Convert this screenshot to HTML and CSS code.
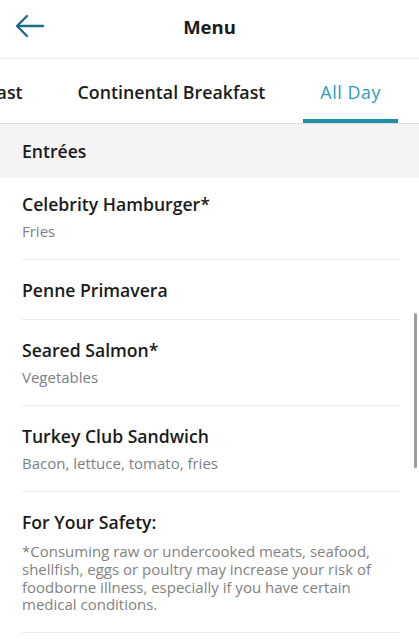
FILE: index.html
```html
<!DOCTYPE html>
<html lang="en">
<head>
    <meta charset="UTF-8">
    <meta name="viewport" content="width=device-width, initial-scale=1.0">
    <title>Menu</title>
    <link rel="stylesheet" href="styles.css">
</head>
<body>
    <header class="top-bar">
        <button class="back-btn" aria-label="Back">
            <svg width="30" height="24" viewBox="0 0 30 24" fill="none" stroke="currentColor" stroke-width="2.4" stroke-linecap="round" stroke-linejoin="round">
                <path d="M28 12H3"/>
                <path d="M12 2L2 12l10 10"/>
            </svg>
        </button>
        <h1>Menu</h1>
    </header>

    <nav class="tabs">
        <div class="tab-track">
            <div class="tab">Breakfast</div>
            <div class="tab">Continental Breakfast</div>
            <div class="tab active">All Day</div>
        </div>
    </nav>

    <main class="content">
        <div class="section-head">Entrées</div>

        <ul class="items">
            <li class="item">
                <div class="item-name">Celebrity Hamburger*</div>
                <div class="item-desc">Fries</div>
            </li>
            <li class="item">
                <div class="item-name">Penne Primavera</div>
            </li>
            <li class="item">
                <div class="item-name">Seared Salmon*</div>
                <div class="item-desc">Vegetables</div>
            </li>
            <li class="item">
                <div class="item-name">Turkey Club Sandwich</div>
                <div class="item-desc">Bacon, lettuce, tomato, fries</div>
            </li>
            <li class="item">
                <div class="item-name">For Your Safety:</div>
                <p class="note">*Consuming raw or undercooked meats, seafood, shellfish, eggs or poultry may increase your risk of foodborne illness, especially if you have certain medical conditions.</p>
            </li>
        </ul>

        <div class="scrollbar"></div>
    </main>
</body>
</html>
```

FILE: styles.css
```css
:root {
    --teal: #1f8fa6;
    --teal-dark: #1e6b8a;
    --text: #1b1b1b;
    --muted: #7b8088;
    --line: #ececec;
    --section-bg: #f4f4f4;
}

* {
    box-sizing: border-box;
}

body {
    margin: 0;
    font-family: "Open Sans", "Noto Sans", sans-serif;
    color: var(--text);
    background: #fff;
    overflow: hidden;
}

.top-bar {
    height: 59px;
    display: flex;
    align-items: center;
    justify-content: center;
    position: relative;
    border-bottom: 1px solid var(--line);
}

.top-bar h1 {
    margin: 0 0 5px;
    font-size: 18.5px;
    font-weight: 700;
}

.back-btn {
    position: absolute;
    left: 15px;
    top: 14px;
    padding: 0;
    border: none;
    background: none;
    color: var(--teal-dark);
    display: flex;
}

.tabs {
    height: 65px;
    overflow: hidden;
    border-bottom: 1px solid #dcdcdc;
    box-shadow: 0 1px 2px rgba(0,0,0,0.06);
}

.tab-track {
    display: flex;
    gap: 21px;
    height: 100%;
    margin-left: -77px;
}

.tab {
    flex: none;
    display: flex;
    align-items: center;
    padding: 6px 17px 0;
    font-size: 17.8px;
    font-weight: 600;
    white-space: nowrap;
    border-bottom: 4px solid transparent;
}

.tab.active {
    color: #29a0b8;
    font-weight: 500;
    letter-spacing: 0.6px;
    border-bottom-color: var(--teal);
}

.content {
    position: relative;
}

.section-head {
    background: var(--section-bg);
    height: 54px;
    padding: 0 22px;
    display: flex;
    align-items: center;
    font-size: 17.6px;
    font-weight: 600;
}

.items {
    list-style: none;
    margin: 0;
    padding: 0 19px 0 22px;
}

.item {
    padding: 19px 0 18px;
    border-bottom: 1px solid var(--line);
}

.item:first-child {
    padding-top: 15px;
}

.item-name {
    font-size: 17.6px;
    font-weight: 600;
    line-height: 22px;
}

.item-desc {
    margin-top: 6px;
    font-size: 15px;
    color: var(--muted);
    line-height: 20px;
}

.note {
    margin: 10px 0 0;
    font-size: 15px;
    line-height: 17.8px;
    color: #828282;
}

.scrollbar {
    position: absolute;
    right: 2px;
    top: 189px;
    width: 3px;
    height: 155px;
    border-radius: 2px;
    background: #9d9d9d;
}
```
